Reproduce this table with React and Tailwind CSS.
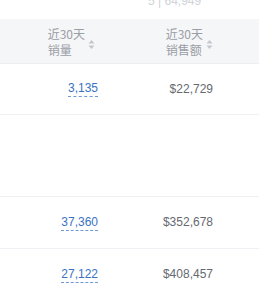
import React from 'react';

const rows = [
  { qty: '3,135', sales: '$22,729', h: 'h-[51px]' },
  { qty: null, sales: null, h: 'h-[82px]' },
  { qty: '37,360', sales: '$352,678', h: 'h-[52px]' },
  { qty: '27,122', sales: '$408,457', h: 'h-[52px]' },
];

function SortIcon() {
  return (
    <svg width="7" height="11" viewBox="0 0 7 11" className="ml-[3px] mt-[6px] shrink-0">
      <path d="M3.5 1 L6.5 4.5 L0.5 4.5 Z" fill="#c4c7cc" />
      <path d="M3.5 10 L6.5 6.5 L0.5 6.5 Z" fill="#c4c7cc" />
    </svg>
  );
}

function HeadCell({ lines, width }) {
  return (
    <div className={`${width} flex justify-end items-center`}>
      <div className="flex items-center">
        <div className="text-left text-[12px] leading-[16px] text-[#9a9ea5]">
          {lines.map((l) => (
            <div key={l}>{l}</div>
          ))}
        </div>
        <SortIcon />
      </div>
    </div>
  );
}

export default function App() {
  return (
    <div
      className="w-[259px] h-[300px] overflow-hidden bg-white text-left"
      style={{ fontFamily: '"Liberation Sans", "Noto Sans CJK SC", sans-serif' }}
    >
      {/* 上一行的尾部 */}
      <div className="h-[26px] -mt-[7px] flex">
        <div className="w-[148px]" />
        <div className="text-[12px] leading-[16px] text-[#cfd2d6]">5 | 64,949</div>
      </div>

      {/* 表头 */}
      <div
        className="flex h-[45px] bg-[#f5f6f8] border-b border-[#eceef1] pt-[1px]"
        style={{ fontFamily: '"Noto Sans CJK SC", sans-serif' }}
      >
        <HeadCell lines={['近30天', '销量']} width="w-[95px]" />
        <HeadCell lines={['近30天', '销售额']} width="w-[118px]" />
      </div>

      {rows.map((r, i) => (
        <div key={i} className={`flex items-center ${r.h} border-b border-[#eef0f3]`}>
          <div className="w-[98px] flex justify-end">
            {r.qty && (
              <span className="text-[12px] leading-[15px] text-[#3a72c4] border-b border-dashed border-[#6f98d6]">
                {r.qty}
              </span>
            )}
          </div>
          <div className="w-[115px] text-right text-[12px] leading-[15px] text-[#666a70]">
            {r.sales}
          </div>
        </div>
      ))}
    </div>
  );
}
